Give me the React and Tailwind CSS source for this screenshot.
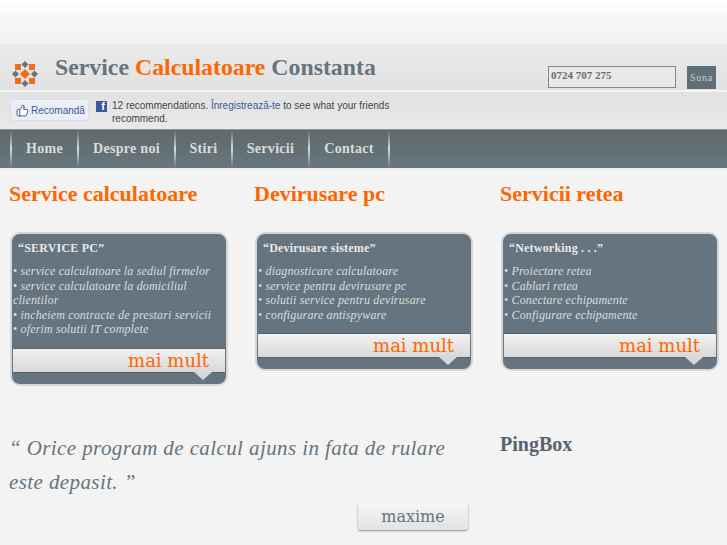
import React from "react";
import { ThumbsUp } from "lucide-react";

const navItems = [
  { label: "Home", width: "w-[65px]" },
  { label: "Despre noi", width: "w-[95px]" },
  { label: "Stiri", width: "w-[55px]" },
  { label: "Servicii", width: "w-[75px]" },
  { label: "Contact", width: "w-[78px]" },
];

const columns = [
  {
    title: "Service calculatoare",
    heading: "“SERVICE PC”",
    lines: [
      "service calculatoare la sediul firmelor",
      "service calculatoare la domiciliul clientilor",
      "incheiem contracte de prestari servicii",
      "oferim solutii IT complete",
    ],
  },
  {
    title: "Devirusare pc",
    heading: "“Devirusare sisteme”",
    lines: [
      "diagnosticare calculatoare",
      "service pentru devirusare pc",
      "solutii service pentru devirusare",
      "configurare antispyware",
    ],
  },
  {
    title: "Servicii retea",
    heading: "“Networking . . .”",
    lines: [
      "Proiectare retea",
      "Cablari retea",
      "Conectare echipamente",
      "Configurare echipamente",
    ],
  },
];

function Logo() {
  return (
    <svg width="28" height="28" viewBox="0 0 28 28" className="mt-[16px] shrink-0">
      <g fill="#f26a1b">
        <rect x="4" y="4" width="6" height="6" />
        <rect x="18" y="4" width="6" height="6" />
        <rect x="4" y="18" width="6" height="6" />
        <rect x="18" y="18" width="6" height="6" />
        <path d="M14 9l5 5-5 5-5-5z" />
      </g>
      <g fill="#66747f">
        <path d="M14 1l3.500 3.500-3.500 3.500-3.500-3.500z" />
        <path d="M14 20l3.500 3.500-3.500 3.500-3.500-3.500z" />
        <path d="M4.500 10.500l3.500 3.500-3.500 3.500-3.500-3.500z" />
        <path d="M23.500 10.500l3.500 3.500-3.500 3.500-3.500-3.500z" />
      </g>
    </svg>
  );
}

function NavSeparator() {
  return <div className="h-full w-[2px] shrink-0 bg-gradient-to-b from-[#5d6b6b] via-[#d8dbdd] to-[#68767f]" />;
}

function Card({ column }) {
  return (
    <div className="w-[218px] rounded-[10px] border-2 border-[#d4d6d8] bg-[#66747f] pb-[11px] pt-[5px]">
      <div className="pl-[6px] text-[12px] font-bold leading-[18px] tracking-[0.2px] text-[#e8e8e8]">{column.heading}</div>
      <ul className="mt-[7px] pl-[1px] text-[12px] italic leading-[14.600px] tracking-[0.15px] text-[#d9dcde]">
        {column.lines.map((line) => (
          <li key={line}>
            <span className="not-italic">•</span> {line}
          </li>
        ))}
      </ul>
      <div className="relative mx-[1px] mt-[11px] h-[25px] border-y border-[#56626c] bg-gradient-to-b from-[#f2f2f2] to-[#d8d8d8] pr-[16px] text-right font-['DejaVu_Serif',serif] text-[18px] leading-[23px] text-[#ff6600]">
        mai mult
        <div className="absolute right-[13px] top-[23px] h-0 w-0 border-x-[9px] border-t-[8px] border-x-transparent border-t-[#d8d8d8]" />
      </div>
    </div>
  );
}

export default function App() {
  return (
    <div className="h-[545px] w-[727px] overflow-hidden bg-[#f3f3f3] font-['Liberation_Serif',serif]">
      <div className="h-[44px] bg-gradient-to-b from-[#ffffff] via-[#f5f5f5] to-[#f3f3f3]" />

      <header className="flex h-[48px] items-start justify-between border-b-2 border-[#f6f6f6] bg-gradient-to-b from-[#ebebeb] to-[#e1e1e1] px-[11px]">
        <div className="flex items-start gap-[16px]">
          <Logo />
          <h1 className="mt-[12px] text-[23.800px] font-bold leading-none text-[#66747f]">
            Service <span className="text-[#ff6600]">Calculatoare</span> Constanta
          </h1>
        </div>
        <div className="mt-[22px] flex items-start gap-[11px]">
          <div className="h-[22px] w-[128px] border border-[#7c8b96] bg-[#e9e9e9] pl-[2px] text-[11px] font-bold leading-[17px] text-[#6d6d6d]">
            0724 707 275
          </div>
          <div className="h-[23px] w-[29px] bg-[#5f6e77] text-center text-[10px] leading-[23px] tracking-[0.8px] text-[#c9ced2]">
            Suna
          </div>
        </div>
      </header>

      <div className="flex h-[37px] items-start bg-gradient-to-b from-[#e2e2e2] to-[#e9e9e9] pl-[10px] font-['Liberation_Sans',sans-serif] text-[10px] leading-[13px]">
        <div className="mt-[7px] flex h-[22px] w-[79px] items-center gap-[2px] rounded-[3px] border border-[#d8dfea] bg-[#eceef5] pl-[5px] text-[#3b5998]">
          <ThumbsUp size={13} fill="#ffffff" strokeWidth={1.800} />
          <span>Recomandă</span>
        </div>
        <div className="ml-[7px] mt-[9px] flex h-[11px] w-[11px] shrink-0 items-end justify-end bg-[#3b5998] pr-[2px] text-[11px] font-bold leading-[11px] text-white">
          f
        </div>
        <p className="ml-[5px] mt-[7px] w-[285px] text-[#444444]">
          12 recommendations. <span className="text-[#3b5998]">Înregistrează-te</span> to see what your friends recommend.
        </p>
      </div>

      <nav className="flex h-[41px] border-t border-b-2 border-t-[#8f9a9a] border-b-[#eeeeee] bg-gradient-to-b from-[#5d6b6b] to-[#68767f] pl-[10px] text-[14px] font-bold leading-[37px] tracking-[0.3px] text-[#dcdcdc]">
        <NavSeparator />
        {navItems.map((item) => (
          <React.Fragment key={item.label}>
            <div className={`text-center ${item.width}`}>{item.label}</div>
            <NavSeparator />
          </React.Fragment>
        ))}
      </nav>

      <main className="pl-[9px] pt-[11px]">
        <div className="grid grid-cols-[245px_246px_220px]">
          {columns.map((column) => (
            <section key={column.title}>
              <h2 className="text-[22px] font-bold leading-[26px] text-[#ff6600]">{column.title}</h2>
              <div className="ml-[1px] mt-[25px]">
                <Card column={column} />
              </div>
            </section>
          ))}
        </div>

        <div className="mt-[45px] grid grid-cols-[491px_220px]">
          <div>
            <p className="w-[450px] text-[21px] italic leading-[34px] tracking-[0.4px] text-[#66747f]">
              “ Orice program de calcul ajuns in fata de rulare este depasit. ”
            </p>
            <div className="ml-[349px] mt-[4px] h-[27px] w-[110px] rounded-[3px] bg-gradient-to-b from-[#f6f6f6] to-[#e2e2e2] text-center font-['DejaVu_Serif',serif] text-[16px] leading-[27px] text-[#66747f] shadow-[0_1px_2px_rgba(0,0,0,0.45)]">
              maxime
            </div>
          </div>
          <h3 className="text-[20px] font-bold leading-[26px] text-[#56646f]">PingBox</h3>
        </div>
      </main>
    </div>
  );
}
